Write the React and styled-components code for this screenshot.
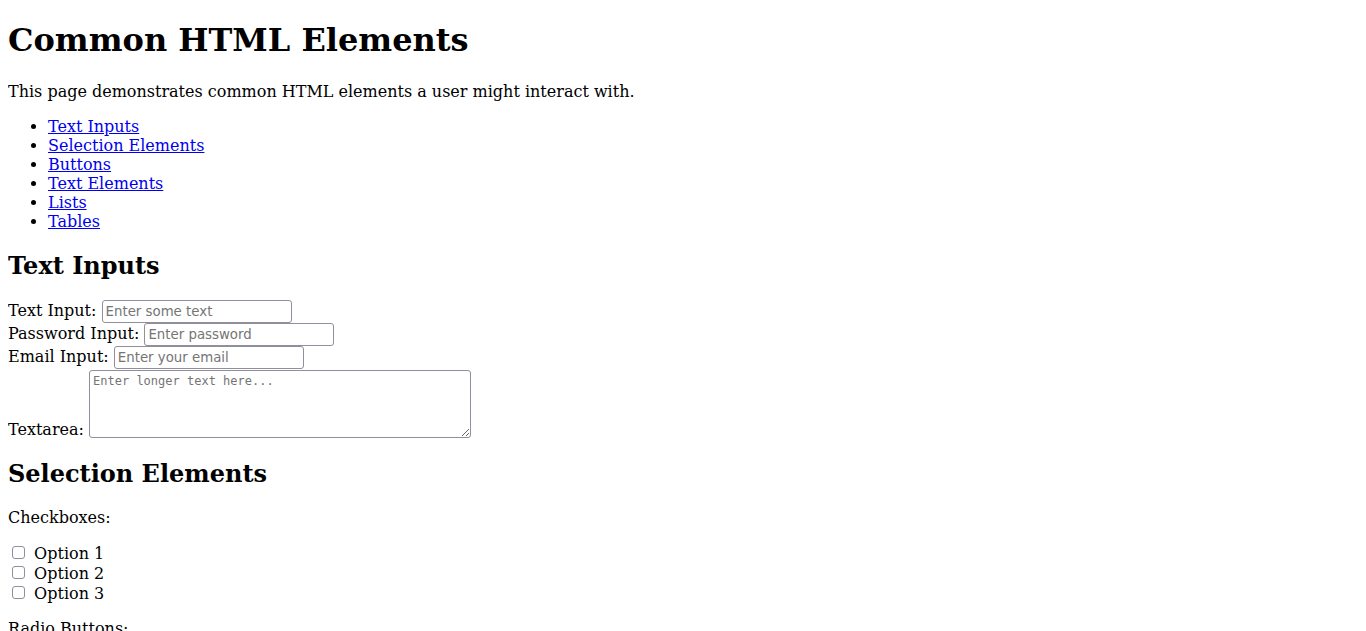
import React from 'react'
import styled, { createGlobalStyle } from 'styled-components'

const GlobalStyle = createGlobalStyle`
  body {
    margin: 0 8px;
    font-family: "DejaVu Serif", serif;
    font-size: 16px;
    color: #000;
    background: #fff;
  }
`

const Title = styled.h1`
  font-size: 2em;
  font-weight: bold;
  margin: 0.67em 0 calc(0.67em + 1px);
`

const Intro = styled.p`
  margin: 1em 0;
`

const NavList = styled.ul`
  margin: 1em 0;
  padding-left: 40px;
  list-style: disc;

  a {
    color: #0000ee;
    text-decoration: underline;
  }
`

const SectionTitle = styled.h2`
  font-size: 1.5em;
  font-weight: bold;
  margin: 0.83em 0;
`

const Field = styled.input`
  box-sizing: border-box;
  width: 190px;
  height: 23px;
  padding: 1px 3px;
  border: 1px solid #8f8f9d;
  border-radius: 3px;
  background: #fff;
  font-family: "DejaVu Sans", sans-serif;
  font-size: 13.333px;
  color: #000;

  &::placeholder {
    color: #757575;
  }
`

const LongText = styled.textarea`
  box-sizing: border-box;
  width: 382px;
  height: 68px;
  margin: 1px 0;
  padding: 3px;
  border: 1px solid #8f8f9d;
  border-radius: 3px;
  vertical-align: bottom;
  font-family: "DejaVu Sans Mono", monospace;
  font-size: 12px;

  &::placeholder {
    color: #757575;
  }
`

const Note = styled.p`
  margin: 1em 0;
`

const Tick = styled.input`
  appearance: none;
  box-sizing: border-box;
  width: 13px;
  height: 13px;
  margin: 3px 4px;
  border: 1px solid #8f8f9d;
  border-radius: ${(p) => (p.type === 'radio' ? '50%' : '3px')};
  background: #fff;
  vertical-align: -3px;
`

const sections = [
  'Text Inputs',
  'Selection Elements',
  'Buttons',
  'Text Elements',
  'Lists',
  'Tables',
]

const App = () => {
  return (
    <>
      <GlobalStyle />
      <Title>Common HTML Elements</Title>
      <Intro>This page demonstrates common HTML elements a user might interact with.</Intro>
      <NavList>
        {sections.map((s) => (
          <li key={s}>
            <a href={'#' + s.toLowerCase().replace(/ /g, '-')}>{s}</a>
          </li>
        ))}
      </NavList>

      <section id="text-inputs">
        <SectionTitle>Text Inputs</SectionTitle>
        <label htmlFor="text">Text Input:</label>{' '}
        <Field type="text" id="text" placeholder="Enter some text" />
        <br />
        <label htmlFor="password">Password Input:</label>{' '}
        <Field type="password" id="password" placeholder="Enter password" />
        <br />
        <label htmlFor="email">Email Input:</label>{' '}
        <Field type="email" id="email" placeholder="Enter your email" />
        <br />
        <label htmlFor="area">Textarea:</label>{' '}
        <LongText id="area" placeholder="Enter longer text here..." />
      </section>

      <section id="selection-elements">
        <SectionTitle>Selection Elements</SectionTitle>
        <Note>Checkboxes:</Note>
        <div>
          <Tick type="checkbox" id="opt1" /> <label htmlFor="opt1">Option 1</label>
          <br />
          <Tick type="checkbox" id="opt2" /> <label htmlFor="opt2">Option 2</label>
          <br />
          <Tick type="checkbox" id="opt3" /> <label htmlFor="opt3">Option 3</label>
        </div>
        <Note>Radio Buttons:</Note>
        <div>
          <Tick type="radio" name="r" id="r1" /> <label htmlFor="r1">Radio 1</label>
          <br />
          <Tick type="radio" name="r" id="r2" /> <label htmlFor="r2">Radio 2</label>
        </div>
      </section>
    </>
  )
}

export default App
